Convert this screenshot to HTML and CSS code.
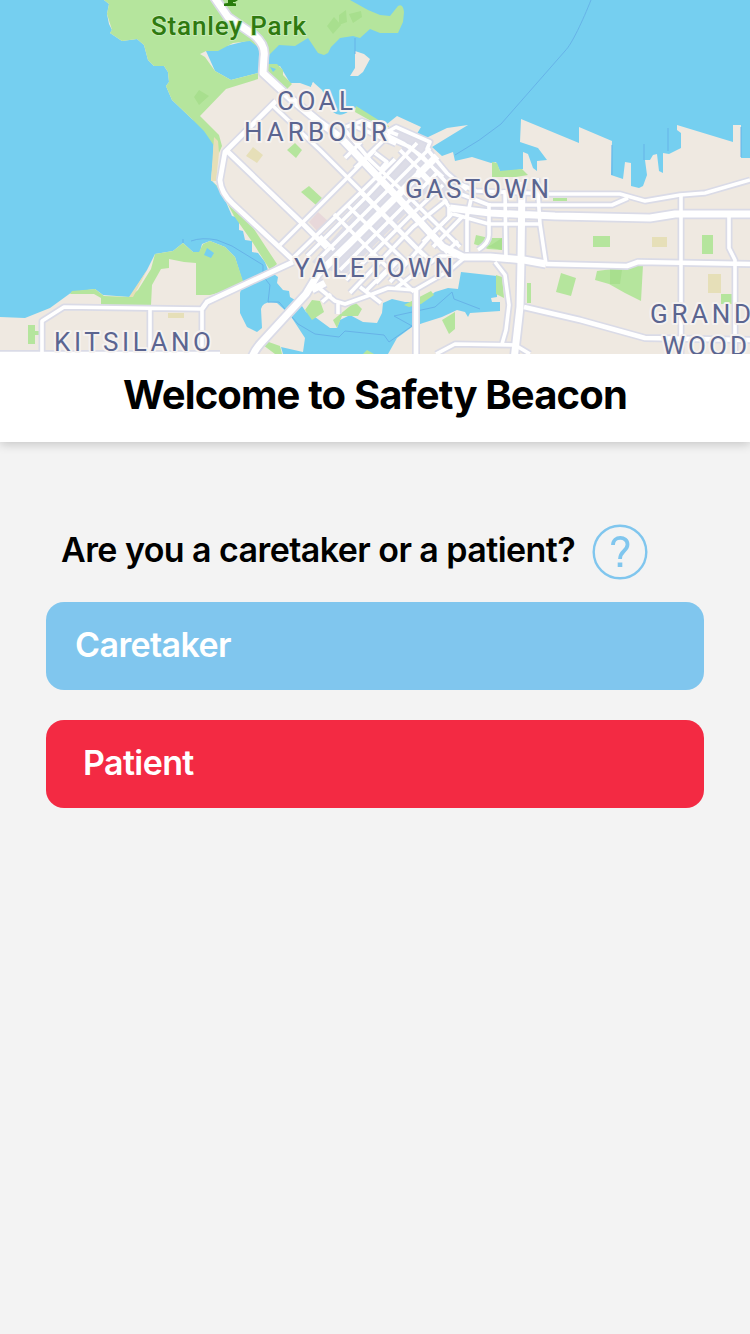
FILE: index.html
```html
<!DOCTYPE html>
<html lang="en">
<head>
<meta charset="utf-8">
<title>Safety Beacon</title>
<link rel="stylesheet" href="styles.css">
</head>
<body>
<main class="screen">
<svg class="map" viewBox="0 0 750 354" role="img" aria-label="Map of Vancouver">
<defs>
<g id="minor">
<path d="M272 105L320 150L370 200L417 248L433 263"/>
<path d="M280 245L302 223L347 178L375 150"/>
<path d="M293 258L360 193L395 159"/>
<path d="M334 214L392 272L414 292M348 206L408 264M361 193L424 256M320 236L334 250"/>
<path d="M307 256L367 196L417 143M320 258L385 193L430 148M340 270L400 210L437 173M346 280L408 218L443 185M350 293L413 227L447 200M365 292L398 259M390 282L433 233L453 213M376 283L402 257"/>
<path d="M346 127L362 121L398 135M345 130L370 160L408 196L460 247M352 125L380 137L396 144M363 123L403 143L423 157L453 190M389 131L396 127L430 142L427 149L447 173L467 190M387 137L410 147L443 177M345 158L361 142M355 168L390 134M375 153L387 162L381 169M400 150L437 187"/>
<path d="M417 170L441 195L449 207M450 190L489 205L550 205H612L628 198M460 184L476 191L550 194H620L645 201L680 195L705 193L750 180"/>
<path d="M489 203V235Q489 243 478 250M467 210V252M449 207V217L423 242M453 214L489 224H540L546 264M537 178L540 224M472 195L467 217"/>
<path d="M505 190L506 260M495 262L505 275L509 305L506 330L502 344M462 217L433 247M458 241L445 253"/>
<path d="M456 256H440L426 265L396 288M42 354V321L64 307L202 309M150 309V354M202 309V354M0 353.500H220"/>
<path d="M681 195V354M729 217V248L735 260V354M436 354L455 344L515 345L530 354"/>
<path d="M319 288L335 301L345 304L370 295L388 288L415 290L450 270L463 259M338 303V314M331 294L322 302M360 287L381 303"/>
</g>
<g id="coast">
<path d="M276 101L225 152L220 180Q221 193 233 204L293 260M227 151L302 223L327 248"/>
<path d="M202 309L207 302L293 262M416 290V354M546 264L627 266L638 262L750 264M524 307L580 320L645 338L750 340"/>
</g>
<g id="major">
<path d="M212 -6L228 17L254 35Q266 45 264 57L263 73L290 98L318 121L340 137L400 200L443 247L463 257H490L524 260L546 264"/>
<path d="M250 364Q252 353 261 343L306 294L318 274L350 243L437 156M312 290L325 283"/>
<path d="M450 208L490 213L555 216L650 218L675 214H750M522 182L521 260L520 307L514 360"/>
</g>
</defs>
<rect class="land" width="750" height="354"/>
<path class="water" d="M0 0H104L109 4L107 14L109 24L112 30L110 33L122 41L137 39L144 45L148 60L154 66H164L168 72L169 82L166 86L172 100L192 119L204 127L214 137L213 160L211 180L219 188L226 202L232 216L239 218V230L243 231L245 240L252 241V252L258 253L265 262L268 270L278 277L277 283L283 290L289 291L290 297L300 303L306 312L315 317L330 328H337L340 320L350 315L363 322L377 323L382 313L383 303L392 299L405 302L423 302L435 292L448 288L458 289L461 272L497 276V297L491 298L492 302H500V311L470 313L468 317L465 312L457 310L442 317L423 323L412 327L397 338L388 354H283L281 347L303 352L305 338L290 315L277 303Q263 300 261 309L262 328L257 332L247 327L240 313V293L243 283L235 257L225 247L210 241L202 244L200 252H193L183 243L173 251L155 254L147 270L130 297L103 295L95 289L72 292L50 308L25 318L0 317Z"/>
<path class="water" d="M250 0H750V158H741V125H733V142L677 125V130L681 133V148L669 154L663 153V173L659 171L657 154L653 155L650 160H645L647 175L643 186L639 188L631 186V163L625 162L623 179L611 175L612 141L579 127V143L521 119L520 142L538 148L547 160L537 161V171L533 168L528 154L523 152V169L510 171H500L496 162L491 163L472 157L455 161L453 152L442 156L432 147L468 125L447 128L422 140L415 137L421 127L397 116L387 124L372 118L357 107L349 111Q340 118 333 112L330 108L313 82L311 87L300 83L290 83L280 66L272 67L258 73L231 80L215 71L206 51L250 40Z"/>
<path class="land" d="M355 51L364 54L370 59L363 72L358 76H350L355 68ZM285 83L300 84L310 89L313 82L322 90L332 111L320 122L300 106Z"/>
<path class="green" d="M104 0H350L368 10L380 15L390 16L398 6Q403 3 404 12L403 22L398 33H380L370 29L360 38L353 36L340 38L331 47L328 53L324 55L318 53L308 38L295 46L279 45L269 55L250 41L233 43L218 51H206L200 54L205 57L215 71L231 80L258 73V79L226 89L200 116L219 135L222 146L219 153L204 131L192 119L172 100L166 86L169 82L168 72L164 66H154L148 60L144 45L137 39L122 41L110 33L112 30L107 14L109 4Z"/>
<path class="green" d="M268 64L277 64L283 70L283 75L292 84L287 89L265 71ZM356 106L380 121L389 126L387 130L355 112ZM212 180L220 190L235 206L250 223L277 264L270 270L253 243L234 216L224 197ZM155 254L173 251L183 243L193 252H199L203 244L210 241L225 247L235 257L243 281L229 290L210 295L196 295V263L184 262L169 259V268L161 269L152 285L151 305H101V298L94 294L70 294L72 291L95 289L104 296L130 297L138 290L151 269ZM28 325H35V331H39V335H35V344H28ZM295 143L302 150L296 158L287 150ZM309 186L322 198L316 205L301 192Z"/>
<path class="green" d="M305 310L312 300L320 301L324 312L312 320ZM333 320L355 302L362 309L358 316H342L337 328ZM263 340L280 346L282 354H275L263 345ZM492 162L497 163L500 171L522 169L528 175L516 177H492ZM476 235L489 238L502 238V250L488 249L474 244ZM496 275L502 277L504 298L496 294ZM527 283H531V303H527ZM442 320L455 312V329L449 334ZM404 305L431 291L434 295L421 304L409 307ZM553 198H567V201H553ZM593 236H610V247H593ZM702 235H713V254H702ZM561 273L576 278L571 296L556 292ZM597 271L643 265L641 301L625 293L609 284L595 280ZM721 294H732V304H721ZM363 354L367 350L374 354Z"/>
<path class="park-shade" d="M194 97L199 90L209 96L199 105ZM327 26L334 17L341 25L333 34ZM339 15L346 10L347 22L339 25ZM349 14L361 11L362 17L353 23ZM610 269L622 270L620 284L610 284ZM488 247L502 238V250Z"/>
<path class="water" d="M207 248L214 253L211 258L204 255ZM270 67L276 69L273 72Z"/>
<path class="sand" d="M214 137L218 141L219 153L216 181H211ZM155 254L140 284L133 297H129L147 270ZM253 147L263 155L257 163L246 156ZM168 313H184V318H168ZM652 237H667V247H652ZM708 274H721V293H708Z"/>
<path class="hospital" d="M318 212L328 221L318 232L309 222Z"/>
<path class="downtown" d="M389 128L430 144L445 172L465 190V196L440 195L425 194L345 275L322 268L312 262L367 200L408 157Z"/>
<path class="ferry" d="M591 0C583 20 572 44 565 51L501 124Q480 141 455 155M191 241Q202 237 217 240L232 246L263 265V276L270 285L268 302L279 302L298 324L315 334L339 337L345 331L384 335L389 342L412 326L394 316L435 307L452 292L454 299L480 309"/>
<path class="shore" d="M668 128V151M644 144V160M355 38V54M741 127V157M612 145V175M183 239V243"/>
<use href="#minor" class="casing minor-casing"/><use href="#coast" class="casing coast-casing"/><use href="#major" class="casing major-casing"/>
<use href="#minor" class="road minor"/><use href="#coast" class="road coast"/><use href="#major" class="road major"/>
<path class="tree" d="M224 6V3.500L228 3V0H233V3L236 3.500V6ZM233 0H238L235 2H233Z"/>
<g class="labels">
<text class="park" x="151" y="35" textLength="155">Stanley Park</text>
<text x="277" y="109.500" textLength="76">COAL</text>
<text x="244" y="141" textLength="143">HARBOUR</text>
<text x="405" y="198" textLength="144">GASTOWN</text>
<text x="294" y="277" textLength="159">YALETOWN</text>
<text x="54" y="351" textLength="157">KITSILANO</text>
<text x="650" y="323" textLength="101">GRAND</text>
<text x="662" y="354.500" textLength="85">WOOD</text>
</g>
</svg>
<header class="header"><h1 class="title">Welcome to Safety Beacon</h1></header>
<section class="choices">
<div class="question">
<h2 class="prompt">Are you a caretaker or a patient?</h2>
<svg class="help" viewBox="0 0 56 56" role="img" aria-label="Help"><circle cx="28" cy="28" r="26.300"/><path d="M21 21C21 11.500 35.500 11.500 35.500 20.500C35.500 27 28 27 28 35"/><path class="dot" d="M25.700 38.500H30.300V43H25.700Z"/></svg>
</div>
<button class="choice caretaker">Caretaker</button>
<button class="choice patient">Patient</button>
</section>
</main>
</body>
</html>
```
FILE: styles.css
```css
body { margin: 0; background: #f3f3f3; font-family: Inter, "Liberation Sans", sans-serif; color: #000; }
.screen { display: flex; flex-direction: column; width: 750px; height: 1334px; overflow: hidden; }
.map { display: block; flex: none; position: relative; z-index: 1; width: 750px; height: 354px; }
.land { fill: #efe9e1; }
.water { fill: #75cff0; }
.green { fill: #b5e59d; }
.park-shade { fill: #a8df8e; }
.sand { fill: #e6dfb8; }
.hospital { fill: #e8d8da; }
.downtown { fill: #dddde7; }
.ferry, .shore { fill: none; stroke: #67b3e8; stroke-width: 1; }
.casing, .road { fill: none; stroke-linejoin: round; }
.casing { stroke: #dadbe7; }
.road { stroke: #fff; }
.minor-casing { stroke-width: 7px; }
.coast-casing { stroke-width: 8px; }
.major-casing { stroke-width: 10.500px; }
.minor { stroke-width: 3.600px; }
.coast { stroke-width: 4.700px; }
.major { stroke-width: 7px; }
.tree { fill: #287d0b; }
.labels { font-family: Roboto, sans-serif; font-size: 26px; fill: #5b6590; stroke: #f5f2f0; stroke-width: 4px; stroke-linejoin: round; paint-order: stroke; }
.park { font-weight: 500; fill: #2f7a10; stroke: #c9ecb8; stroke-width: 2px; }
.header { flex: none; display: flex; justify-content: center; height: 88px; background: #fff; box-shadow: 0 2px 10px rgba(0, 0, 0, .2); }
.title { margin: 0; padding-top: 17px; font-size: 40px; line-height: 48px; font-weight: 700; letter-spacing: -.86px; white-space: nowrap; }
.choices { display: flex; flex-direction: column; padding: 82px 46px 0; }
.question { display: flex; align-items: center; gap: 17px; height: 56px; margin-bottom: 22px; padding-left: 15px; }
.prompt { margin: 0; width: 514px; padding-bottom: 4px; font-size: 34px; line-height: 42px; font-weight: 600; letter-spacing: -.57px; white-space: nowrap; }
.help { width: 56px; height: 56px; fill: none; stroke: #80c6ee; stroke-width: 2.400px; }
.help path { stroke-width: 3.800px; }
.help .dot { fill: #80c6ee; stroke: none; }
.choice { height: 88px; margin: 0 0 30px; border: 0; border-radius: 18px; padding: 0 29px 4px; color: #fff; font-family: inherit; font-size: 34px; font-weight: 600; text-align: left; letter-spacing: -.6px; }
.caretaker { background: #80c6ee; }
.patient { background: #f32a43; padding-left: 37px; }
```
